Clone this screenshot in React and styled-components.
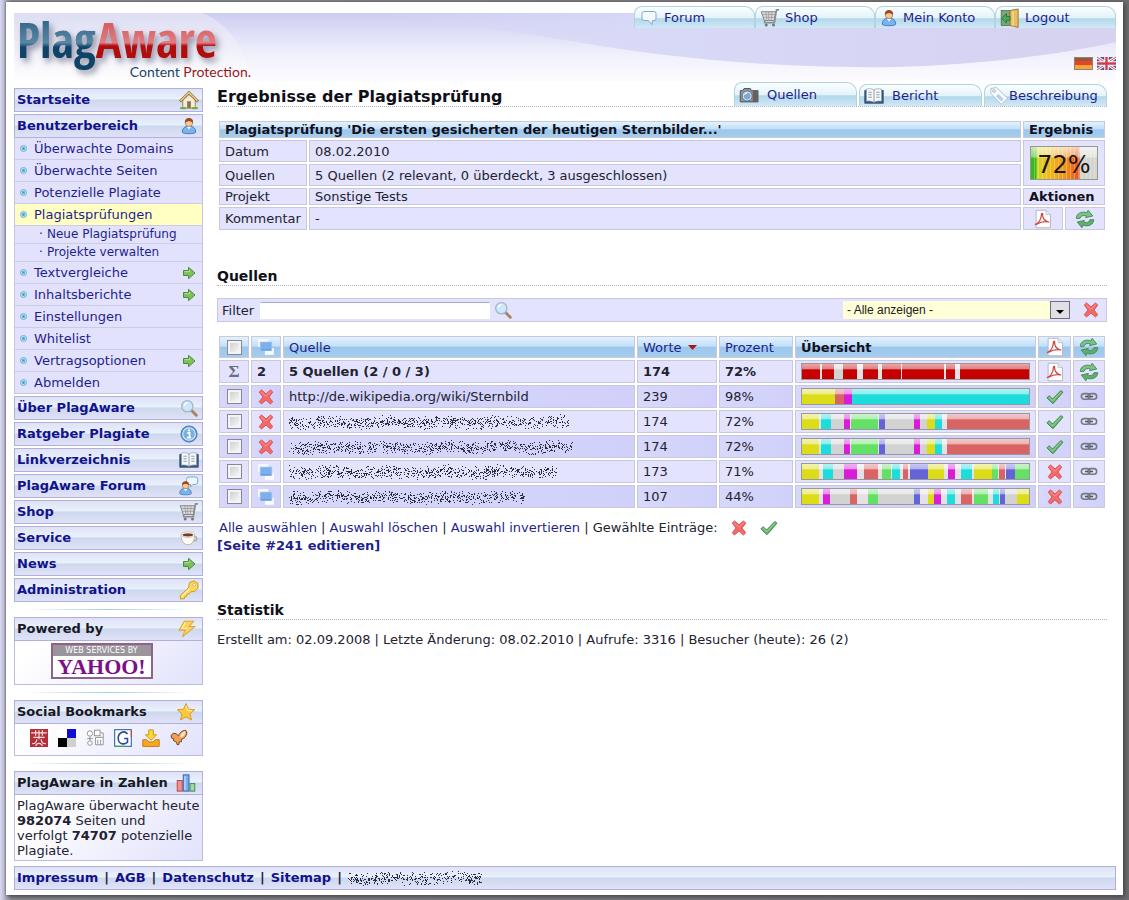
import styled, { createGlobalStyle, css } from "styled-components";

const GlobalStyle = createGlobalStyle`
  *, *::before, *::after {
    box-sizing: border-box;
  }

  body {
    margin: 0;
    background: linear-gradient(90deg, #d9d9f2 0, #c4c4dc 3px, #a8a8b8 6px, #8a8a92 12px, #6c6c70 100%);
    color: #222230;
    font-family: "DejaVu Sans", Verdana, sans-serif;
    font-size: 13px;
    line-height: 15px;
  }

  a {
    color: #1f1f8c;
    text-decoration: none;
  }
`;

/* ---------- icons ---------- */

const Svg = styled.svg`
  display: block;
  flex: none;
  width: ${(props) => props.$size || 18}px;
  height: ${(props) => props.$size || 18}px;
`;

function Icon({ size, children }) {
  return (
    <Svg $size={size} viewBox="0 0 16 16" aria-hidden="true">
      {children}
    </Svg>
  );
}

const HouseIcon = () => (
  <Icon size={20}>
    <path d="M3 8v6.500h10V8L8 3.500z" fill="#f6ecd6" stroke="#a08a5c" strokeWidth=".8" />
    <path d="M.8 9.200 8 2.200l7.200 7" fill="none" stroke="#8a6c3c" strokeWidth="2.400" />
    <path d="M1.200 8.700 8 2.100l6.800 6.600" fill="none" stroke="#e2c48c" strokeWidth="1.200" />
    <rect x="6.500" y="9" width="3" height="5.500" fill="#8b7350" />
    <path d="M1 14.500h4.500M10.500 14.500H15" stroke="#6fae4c" strokeWidth="1.800" />
  </Icon>
);

function Person() {
  return (
    <>
      <path d="M2 13.500c0-3 2-5 4-5.200h4c2 .2 4 2.200 4 5.200-1 1.800-11 1.800-12 0z" fill="#7ab4ee" stroke="#3c78b8" strokeWidth=".8" />
      <path d="M6 8.500h4L8 11z" fill="#fff" />
      <circle cx="8" cy="5.200" r="3.300" fill="#f6c898" stroke="#a8683c" strokeWidth=".6" />
      <path d="M4.400 5.400C4 2 6 .8 8 .8s4 1.200 3.600 4.600C10.800 4.200 9 3.800 8 3.800s-2.800.4-3.600 1.600z" fill="#9c4a1c" />
    </>
  );
}

const UserIcon = () => <Icon><Person /></Icon>;

const ForumUserIcon = () => (
  <Icon size={20}>
    <path d="M8 .8h5q2 0 2 2v2q0 2-2 2h-2L9 9l.3-2.200Q6 6.800 6 4.800v-2q0-2 2-2z" fill="#eef7ff" stroke="#78a8d4" strokeWidth=".8" />
    <g transform="translate(-1 3.500) scale(.78)"><Person /></g>
  </Icon>
);

const BubbleIcon = () => (
  <Icon size={16}>
    <path d="M3 1.500h10q2 0 2 2v5q0 2-2 2h-1.500L11 14.500 7.500 10.500H3q-2 0-2-2v-5q0-2 2-2z" fill="#f2faff" stroke="#88aac4" />
  </Icon>
);

const SearchIcon = () => (
  <Icon>
    <path d="m10 10 4.500 4.500" stroke="#a88460" strokeWidth="2.600" strokeLinecap="round" />
    <circle cx="6.500" cy="6.500" r="5" fill="#cfe6fa" stroke="#a4b8cc" strokeWidth="1.200" />
    <path d="M3.800 6a3 3 0 0 1 3-2.600" fill="none" stroke="#fff" strokeWidth="1.200" />
  </Icon>
);

const InfoIcon = () => (
  <Icon>
    <circle cx="8" cy="8" r="7.200" fill="#5c94cc" stroke="#4c7cb0" strokeWidth=".8" />
    <circle cx="8" cy="8" r="5.600" fill="#7cb0e0" stroke="#e4f0fc" strokeWidth=".9" />
    <path d="M6.500 7h2v4M6.300 11.300h3.600" stroke="#fff" strokeWidth="1.500" fill="none" />
    <circle cx="8" cy="4.800" r="1" fill="#fff" />
  </Icon>
);

const BookIcon = () => (
  <Icon size={20}>
    <path d="M.6 3.500h14.800v10.300H.6z" fill="#3c5c80" stroke="#2c4460" strokeWidth=".6" />
    <path d="M2 2.500c2-.6 4-.6 6 .7 2-1.300 4-1.300 6-.7v9.600c-2-.4-4-.2-6 .9-2-1.100-4-1.300-6-.9z" fill="#f6f8fa" stroke="#8898a8" strokeWidth=".5" />
    <path d="M8 3.200V13M3.500 5h2.700M3.500 7h2.700M3.500 9h2.700M9.800 5h2.700M9.800 7h2.700M9.800 9h2.700" stroke="#8090a4" strokeWidth=".7" />
  </Icon>
);

const CartIcon = () => (
  <Icon size={20}>
    <path d="M1 3h11.500l-1 7H3.500z" fill="#dcdcdc" stroke="#848484" strokeWidth=".8" />
    <path d="M2 5.200h10M2.500 7.500h9M4.700 3l.8 7M7 3v7M9.600 3 9 10" stroke="#969696" strokeWidth=".6" />
    <path d="M15.200 1.500h-2l-1.700 10.300H3.800L3.500 10" fill="none" stroke="#8c8c8c" strokeWidth="1.300" />
    <circle cx="5" cy="13.600" r="1.200" fill="#777" />
    <circle cx="10.800" cy="13.600" r="1.200" fill="#777" />
  </Icon>
);

const CupIcon = () => (
  <Icon>
    <path d="M11.500 6.500c4.500-1 4.500 4 .3 4.300" fill="none" stroke="#b4aca4" strokeWidth="1.300" />
    <path d="M1 5c0 5 2 9 6 9s6-4 6-9z" fill="#fcfaf6" stroke="#b8b0a4" strokeWidth=".8" />
    <ellipse cx="7" cy="5" rx="6" ry="2.500" fill="#fff" stroke="#c0b8ac" strokeWidth=".7" />
    <ellipse cx="7" cy="5.200" rx="4.700" ry="1.500" fill="#7c3c20" />
  </Icon>
);

const ArrowIcon = () => (
  <Icon size={16}>
    <path d="M2.500 5.500h5V2.300L14 8l-6.500 5.700v-3.200h-5z" fill="#7cc05c" stroke="#4a8c38" />
    <path d="M3.500 6.600h5V5" stroke="#b4e09c" fill="none" />
  </Icon>
);

const KeyIcon = () => (
  <Icon size={20}>
    <path d="M8.500 2 12 .7l3 1.800.2 4-2.700 2.700-3 .2-1.700 1.900-1.500.2-.2 1.700-1.600.3-.2 1.500-3.200.2L1 12.500l6.500-6.300z" fill="#fbd85c" stroke="#d09a2c" strokeWidth=".8" />
    <circle cx="12.200" cy="3.800" r="1.100" fill="#fff" stroke="#d09a2c" strokeWidth=".5" />
    <path d="m2.400 13 6-6" stroke="#fff2a8" />
  </Icon>
);

const BoltIcon = () => (
  <Icon>
    <path d="M5.500 1.200h8.300L10 5.800h5L3.800 15l2.600-6H1z" fill="#fcd45c" stroke="#e0a43c" strokeWidth=".9" />
    <path d="m6.500 2.400-3 5.200h4.800" fill="none" stroke="#fff0b0" />
  </Icon>
);

const StarIcon = () => (
  <Icon size={20}>
    <path d="m8 1.200 2 4.500 5 .5-3.800 3.300 1.200 4.900L8 11.800l-4.400 2.600 1.200-4.900L1 6.200l5-.5z" fill="#fcc83c" stroke="#dc9c30" strokeWidth=".8" strokeLinejoin="round" />
    <path d="m8 3 1.200 3.500 3.600.6" fill="none" stroke="#ffe894" />
  </Icon>
);

const ChartIcon = () => (
  <Icon size={20}>
    <rect x="1" y="6" width="4" height="8.500" fill="#f09090" stroke="#c04848" strokeWidth=".8" />
    <rect x="5.800" y="1.500" width="4.600" height="13" fill="#78acec" stroke="#3468b4" strokeWidth=".8" />
    <rect x="11.200" y="8.500" width="3.800" height="6" fill="#a8d8a0" stroke="#3c8c64" strokeWidth=".8" />
    <path d="M7.200 2.500v11" stroke="#c8e0fc" />
  </Icon>
);

const DoorIcon = () => (
  <Icon size={20}>
    <rect x="1" y="2" width="7" height="12" fill="#7ca878" stroke="#587858" strokeWidth=".7" />
    <path d="m8 2 6.500-1.200v14.700L8 14z" fill="#e8bc60" stroke="#a07830" strokeWidth=".8" />
    <path d="M10.500 2.500v12" stroke="#f8dc98" />
    <path d="M8 6.800H5.200V4.500L1.200 8.300l4 3.800V9.800H8z" fill="#4ca85c" stroke="#28743c" strokeWidth=".7" />
  </Icon>
);

const CameraIcon = () => (
  <Icon size={20}>
    <path d="M1 4.500h2l1-1.700h5l1 1.700h5.200v9H1z" fill="#8c94a0" stroke="#505860" strokeWidth=".8" />
    <path d="M11 4.500h4.200v9H11z" fill="#68605c" />
    <circle cx="6.500" cy="8.800" r="4" fill="#d8e4f0" stroke="#586878" strokeWidth=".7" />
    <circle cx="6.500" cy="8.800" r="2.700" fill="#7ca8d8" />
    <path d="M4.500 8a2 2 0 0 1 2-1.600" fill="none" stroke="#fff" strokeWidth=".8" />
  </Icon>
);

const TagIcon = () => (
  <Icon size={20}>
    <path d="M1.500 2 6 1.200l8.800 8.500-5 5L1.500 6z" fill="#fafcff" stroke="#b4c0cc" strokeWidth=".8" />
    <path d="m7.500 6.200 4.300 4.200-2 2-4.300-4.200z" fill="#b4d0f0" />
    <circle cx="4" cy="4" r="1.200" fill="#dce8f4" stroke="#98a8b8" strokeWidth=".5" />
  </Icon>
);

const PdfIcon = () => (
  <Icon size={20}>
    <path d="M2.500 1h8l3.500 3.500V15H2.500z" fill="#fff" stroke="#b8b8c0" strokeWidth=".8" />
    <path d="M10.500 1v3.500H14" fill="#eee" stroke="#b8b8c0" strokeWidth=".6" />
    <path d="M1.500 12.500c3-1 5-4.500 5.300-8.300.1-1.200 1-.8.900.2C7.500 7 9.500 9.500 13 10.600M3 12.200c3-2 6-2.500 10-1.800" fill="none" stroke="#cc4440" />
  </Icon>
);

const RefreshIcon = () => (
  <Icon size={20}>
    <path d="M1 7.500C1 3.500 5.500 1.500 9.500 3L10.500 1l3.700 4.600-5.700 1.300.6-1.400C6.800 4.600 4.500 5.500 4 7.500z" fill="#7cc084" stroke="#3c8854" strokeWidth=".7" />
    <path d="M15 8.500c0 4-4.500 6-8.500 4.500L5.500 15l-3.700-4.600 5.700-1.300-.6 1.400c2.300.9 4.600 0 5.100-2z" fill="#62ac6c" stroke="#3c8854" strokeWidth=".7" />
  </Icon>
);

const CrossIcon = () => (
  <Icon>
    <path d="M2 3.600 4 1.700l4 3.600 4-3.600 2 2L10.600 8l3.400 4.200-2.100 2L8 10.600l-4 3.600-2-2L5.400 8z" fill="#f46a6a" stroke="#d84848" strokeWidth=".8" strokeLinejoin="round" />
    <path d="m3.500 3.500 4.400 3.700 4.300-4" stroke="#f88c88" fill="none" />
  </Icon>
);

const CheckIcon = () => (
  <Icon>
    <path d="m.8 8.800 2-2 3 3 7.400-7.500 1.900 1.400L6.200 14z" fill="#66b46c" stroke="#388448" strokeWidth=".8" strokeLinejoin="round" />
    <path d="m2.600 8.200 3.200 3.300 7.600-8" stroke="#a4dca4" fill="none" strokeWidth=".8" />
  </Icon>
);

const LinkIcon = () => (
  <Icon>
    <rect x="1.200" y="5" width="7.600" height="5" rx="2.500" fill="none" stroke="#787880" strokeWidth="1.400" />
    <rect x="7.200" y="5" width="7.600" height="5" rx="2.500" fill="none" stroke="#787880" strokeWidth="1.400" />
    <path d="M4.500 7.500h2.500M9 7.500h2.500" stroke="#50505c" strokeWidth="1.300" />
  </Icon>
);

const PagesIcon = () => (
  <Icon>
    <rect x="1" y="1" width="9" height="7" fill="#f8fbff" />
    <rect x="7" y="9" width="8" height="6" fill="#f8fbff" />
    <rect x="2.800" y="3.600" width="10.400" height="7.600" fill="#7cb0ec" stroke="#a0c4f0" strokeWidth=".6" />
    <path d="M3.500 10.600h9" stroke="#6494d8" />
  </Icon>
);

const Flag = styled.svg`
  display: block;
  width: 19px;
  height: 13px;
`;

const GermanFlag = () => (
  <Flag viewBox="0 0 19 13" role="img" aria-label="Deutsch">
    <rect width="19" height="13" fill="#98806c" />
    <rect x="1" y="1" width="17" height="3" fill="#8c5c48" />
    <rect x="1" y="4" width="17" height="4" fill="#e84424" />
    <rect x="1" y="8" width="17" height="4" fill="#f8a43c" />
  </Flag>
);

const BritishFlag = () => (
  <Flag viewBox="0 0 19 13" role="img" aria-label="English">
    <rect width="19" height="13" fill="#4c5888" />
    <path d="m0 0 19 13M19 0 0 13" stroke="#fff" strokeWidth="3" />
    <path d="m0 0 19 13M19 0 0 13" stroke="#cc4458" />
    <path d="M9.500 0v13M0 6.500h19" stroke="#fff" strokeWidth="4.500" />
    <path d="M9.500 0v13M0 6.500h19" stroke="#d03c50" strokeWidth="2.400" />
  </Flag>
);

/* ---------- frame ---------- */

const Page = styled.div`
  margin: 2px 6px 5px;
  padding: 4px 7px 5px 8px;
  background: #fff;
  box-shadow: 0 0 2px #55555c, 2px 2px 4px #48484c;
`;

const Header = styled.header`
  display: grid;
  grid-template-columns: 1fr;
`;

const HeaderArt = styled.svg`
  grid-area: 1 / 1;
  width: 100%;
  height: 68px;
  margin-top: 7px;
`;

const HeaderContent = styled.div`
  grid-area: 1 / 1;
  display: flex;
  justify-content: space-between;
  height: 76px;
`;

const Logo = styled.a`
  display: flex;
  flex-direction: column;
  align-items: flex-end;
  width: 237px;
  padding-top: 6px;
`;

const LogoWord = styled.svg`
  display: block;
  width: 100%;
  height: 52px;
  overflow: visible;
  font-family: "Liberation Sans Narrow", "Open Sans Condensed", "DejaVu Sans Condensed", sans-serif;
  font-size: 48px;
  font-weight: 700;
`;

const LogoClaim = styled.span`
  color: #1c4468;
  font-family: Lato, sans-serif;
  font-size: 14px;
  line-height: 16px;

  em {
    color: #981820;
    font-style: normal;
  }
`;

const HeaderSide = styled.div`
  display: flex;
  flex-direction: column;
  align-items: flex-end;
  justify-content: space-between;
  padding-bottom: 12px;
`;

const Flags = styled.div`
  display: flex;
  gap: 4px;
`;

const Tabs = styled.nav`
  display: flex;
  align-items: flex-end;
  gap: ${(props) => props.$gap || 0}px;
`;

const Tab = styled.a`
  display: flex;
  align-items: center;
  gap: ${(props) => props.$gap ?? 8}px;
  width: ${(props) => props.$width}px;
  height: ${(props) => (props.$active ? 24 : 22)}px;
  padding: 0 4px;
  border: 1px solid #b4d4dc;
  border-bottom: 0;
  border-radius: 8px 10px 0 0;
  background: linear-gradient(#fafeff 0, #e4f4fa 50%, #b4d8ea 56%, #d0e8f8 100%);
  white-space: nowrap;
`;

const Columns = styled.div`
  display: grid;
  grid-template-columns: 189px minmax(0, 1fr);
  column-gap: 14px;
`;

/* ---------- sidebar ---------- */

const Sidebar = styled.aside`
  display: flex;
  flex-direction: column;
  padding-top: 6px;
`;

const SideMenu = styled.nav`
  display: flex;
  flex-direction: column;
  gap: 2px;
`;

const barStyle = css`
  border: 1px solid #b0b0d8;
  background: linear-gradient(#dfe2f6 0, #e9f1fc 45%, #cdd8ec 50%, #e0e2fa 100%);
  font-weight: 700;
`;

const NavBar = styled.a`
  ${barStyle}
  display: flex;
  align-items: center;
  justify-content: space-between;
  height: 24px;
  padding: 0 3px 1px 2px;
  color: #12128c;
`;

const IconSlot = styled.span`
  display: flex;
  justify-content: center;
  width: 20px;
`;

const SubMenu = styled.ul`
  margin: 0;
  padding: 0;
  border: 1px solid #c8c4e4;
  border-top: 0;
  background: #e2e2fd;
  list-style: none;
`;

const SubItem = styled.li`
  a {
    display: flex;
    align-items: center;
    height: ${(props) => (props.$nested ? 18 : 22)}px;
    padding: 0 5px 0 ${(props) => (props.$nested ? 24 : 5)}px;
    background: ${(props) => (props.$active ? "#ffffc4" : "transparent")};
    border-bottom: 1px solid #cccce6;
    font-size: ${(props) => (props.$nested ? 12 : 13)}px;
  }

  &:last-child a {
    height: 21px;
    border-bottom: 0;
  }

  svg:last-child {
    margin-left: auto;
  }
`;

const Bullet = styled.span`
  width: 7px;
  height: 7px;
  margin-right: 7px;
  border: 1px solid #68b0d0;
  border-radius: 50%;
  background: radial-gradient(#48a0cc 25%, #c0e8f8 60%);
`;

const Dot = styled.span`
  width: 8px;
`;

const Separator = styled.hr`
  width: 100%;
  height: 1px;
  margin: 7px 0;
  border: 0;
  background: linear-gradient(90deg, transparent 5%, #a8ccdc 50%, transparent 95%);
`;

const Box = styled.section`
  border: 1px solid #bcbce0;
  background: linear-gradient(135deg, #fff 20%, #e2e2fc);
`;

const BoxTitle = styled.h2`
  ${barStyle}
  display: flex;
  align-items: center;
  justify-content: space-between;
  height: 24px;
  margin: -1px -1px 0;
  padding: 0 6px 1px 2px;
  font-size: 13px;
  color: #181824;
`;

const BoxBody = styled.div`
  display: flex;
  justify-content: center;
  gap: 10px;
  padding: ${(props) => props.$pad};
`;

const BoxText = styled.p`
  margin: 0;
  padding: 3px 2px 2px;
`;

const Yahoo = styled.a`
  display: flex;
  flex-direction: column;
  width: 102px;
  height: 36px;
  border: 2px solid #8c6488;
  background: #fff;
  text-align: center;

  small {
    background: #9c949c;
    color: #fff;
    font-size: 8px;
    line-height: 11px;
    white-space: nowrap;
  }

  span {
    color: #7c1088;
    font: 700 22px/21px "Liberation Serif", serif;
  }
`;

/* ---------- main ---------- */

const Main = styled.main`
  padding-right: 9px;
`;

const TitleBar = styled.div`
  display: flex;
  align-items: flex-end;
  justify-content: space-between;
  border-bottom: 1px dotted #b4b4bc;
`;

const Title = styled.h1`
  margin: 0;
  color: #101018;
  font-size: 16px;
  line-height: 18px;
`;

const Heading = styled.h2`
  margin: ${(props) => props.$space}px 0 0;
  border-bottom: 1px dotted #b4b4bc;
  color: #101018;
  font-size: 14px;
  line-height: 17px;
`;

const Table = styled.table`
  width: 100%;
  margin-top: 12px;
  border-spacing: 2px;
  table-layout: fixed;
`;

const cellStyle = css`
  padding: 0 5px;
  border: 1px solid #c9c8de;
  text-align: left;
  white-space: nowrap;
`;

const headFill = "linear-gradient(#e2f2fe 0, #c4e0f8 45%, #9cc6ec 52%, #a4ceee 100%)";

const Th = styled.th`
  ${cellStyle}
  height: ${(props) => props.$height || 21}px;
  background: ${(props) => (props.$plain ? "#e3e3fd" : headFill)};
  color: #101020;
  font-weight: ${(props) => (props.$light ? 400 : 700)};
`;

const Td = styled.td`
  ${cellStyle}
  height: ${(props) => props.$height || 23}px;
  background: ${(props) => (props.$dark ? "linear-gradient(90deg, #d8d8fb, #d0d0fa)" : "#e3e3fd")};
  font-weight: ${(props) => (props.$strong ? 700 : 400)};
`;

const Center = styled.span`
  display: flex;
  align-items: center;
  justify-content: center;
`;

const Result = styled.div`
  width: 68px;
  height: 34px;
  margin: 0 auto;
  border: 1px solid #98988c;
  background:
    linear-gradient(rgba(255, 255, 255, 0.7), rgba(255, 255, 255, 0.4) 32%, transparent 34%),
    repeating-linear-gradient(90deg, transparent 0 3px, rgba(255, 255, 160, 0.3) 3px 4px),
    linear-gradient(90deg, #38b820 0 5px, #c8d830 6px, #f0c020 15px, #f09020 35px, #e85020 48px, #d4d4d4 49px);
  color: #181818;
  font-size: 24px;
  line-height: 37px;
  text-align: center;
`;

const FilterBar = styled.form`
  display: flex;
  align-items: center;
  margin-top: 12px;
  height: 24px;
  padding: 0 6px 0 4px;
  border: 1px solid #c9c8de;
  background: #e3e3fd;
`;

const FilterInput = styled.input`
  width: 230px;
  height: 17px;
  margin: 0 4px 0 6px;
  border: 1px solid #fff;
  border-top-color: #a8a8c4;
  background: #fff;
  font: inherit;
`;

const IconButton = styled.button`
  display: inline-flex;
  padding: 0;
  border: 0;
  background: none;
  cursor: pointer;
`;

const SelectBox = styled.span`
  display: grid;
  align-items: center;
  width: 227px;
  margin: 0 12px 0 auto;

  select {
    grid-area: 1 / 1;
    height: 18px;
    padding: 0 4px;
    border: 0;
    border-radius: 0;
    appearance: none;
    background: #ffffd8;
    color: #202020;
    font: 12px "Liberation Sans", Arial, sans-serif;
  }

  svg {
    grid-area: 1 / 1;
    justify-self: end;
    width: 20px;
    height: 18px;
    pointer-events: none;
  }
`;

const Checkbox = styled.input.attrs({ type: "checkbox" })`
  width: 15px;
  height: 15px;
  margin: 0;
  border: 1px solid #888890;
  outline: 2px solid #f4f4f8;
  outline-offset: -3px;
  appearance: none;
  background: linear-gradient(135deg, #c8c8c8, #fff);

  &:checked {
    background: #4c6ca8;
  }
`;

const SortMark = styled.svg`
  width: 9px;
  height: 5px;
  margin: 0 0 2px 6px;
`;

const Sigma = styled.b`
  color: #6c6c84;
  font: 700 17px/17px "Liberation Serif", serif;
`;

const Bar = styled.div`
  display: flex;
  height: 17px;
  border: 1px solid #9898a0;

  i {
    background-image: linear-gradient(
      rgba(255, 255, 255, 0.65) 0,
      rgba(255, 255, 255, 0.5) 34%,
      rgba(255, 255, 255, 0) 38%
    );
  }
`;

const Noise = styled.svg`
  display: block;
  height: 16px;
`;

const Line = styled.div`
  display: flex;
  align-items: center;
  margin-top: ${(props) => props.$space || 0}px;
  padding-left: ${(props) => props.$indent || 0}px;
  line-height: 18px;
  white-space: pre;
`;

const LineIcons = styled.span`
  display: flex;
  gap: 12px;
  margin-left: 12px;
`;

const Footer = styled.footer`
  ${barStyle}
  display: flex;
  align-items: center;
  gap: 6px;
  height: 24px;
  margin-top: 5px;
  padding: 0 2px 1px;

  a {
    color: #12128c;
  }
`;

/* ---------- data ---------- */

const barColors = {
  r: "#c40000",
  g: "#d2d2d2",
  w: "#e4e0e4",
  y: "#dcdc18",
  s: "#d86464",
  m: "#d81cd8",
  c: "#1cdcdc",
  G: "#64e064",
  b: "#6464d8",
};

const repeated = "y52 w5 c31 g39 m18 w2 G82 w3 b17 g89 m17 g21 y25 c21 w16 s246";

const sources = [
  { url: "http://de.wikipedia.org/wiki/Sternbild", words: 239, percent: "98%", out: true, ok: true, bar: "y98 s30 m22 c534" },
  { noise: 280, words: 174, percent: "72%", out: true, ok: true, bar: repeated },
  { noise: 284, words: 174, percent: "72%", out: true, ok: true, bar: repeated },
  {
    noise: 268,
    words: 173,
    percent: "71%",
    bar: "y52 w12 c30 g33 m39 w21 s42 w13 G26 w3 c24 w9 s16 w5 b54 y48 w12 m22 w17 c34 w5 y56 G19 w3 s18 w3 b26 G42",
  },
  {
    noise: 236,
    words: 107,
    percent: "44%",
    bar: "y50 w14 m21 g61 s20 w33 G30 g109 b17 w25 y19 m21 w18 c23 w17 s34 w5 G44 w13 c19 w3 b17 g34 y37",
  },
];

const totalBar = "r53 w7 r35 g28 r44 w16 r46 w11 r57 w3 r128 w5 r28 w14 r209";

const subMenu = [
  { label: "Überwachte Domains" },
  { label: "Überwachte Seiten" },
  { label: "Potenzielle Plagiate" },
  { label: "Plagiatsprüfungen", active: true },
  { label: "Neue Plagiatsprüfung", nested: true },
  { label: "Projekte verwalten", nested: true },
  { label: "Textvergleiche", more: true },
  { label: "Inhaltsberichte", more: true },
  { label: "Einstellungen" },
  { label: "Whitelist" },
  { label: "Vertragsoptionen", more: true },
  { label: "Abmelden" },
];

const navItems = [
  ["Über PlagAware", SearchIcon],
  ["Ratgeber Plagiate", InfoIcon],
  ["Linkverzeichnis", BookIcon],
  ["PlagAware Forum", ForumUserIcon],
  ["Shop", CartIcon],
  ["Service", CupIcon],
  ["News", ArrowIcon],
  ["Administration", KeyIcon],
];

/* ---------- parts ---------- */

function MatchBar({ segments }) {
  return (
    <Bar>
      {segments.split(" ").map((part, i) => (
        <i key={i} style={{ flex: `${part.slice(1)} 0 0`, backgroundColor: barColors[part[0]] }} />
      ))}
    </Bar>
  );
}

// speckles that make an address unreadable
function Scribble({ width, seed = 1 }) {
  let state = seed * 7919 + width;
  const random = () => {
    state = (state * 1103515245 + 12345) % 2147483648;
    return state / 2147483648;
  };
  let d = "";
  for (let i = 0; i < width * 3; i++) {
    const x = Math.floor(random() * width);
    const spread = random() + random() - 1;
    const y = Math.round(8 + Math.sin(x / 9) + spread * 7);
    d += `M${x} ${y}h1v1h-1z`;
  }
  return (
    <Noise width={width} viewBox={`0 0 ${width} 16`} aria-hidden="true">
      <path d={d} fill="#2c2c3c" />
    </Noise>
  );
}

function PlagLogo() {
  return (
    <Logo href="#">
      <LogoWord viewBox="0 0 237 52">
        <defs>
          <linearGradient id="word-blue" x1="0" y1="0" x2="0" y2="1">
            <stop offset="0" stopColor="#1c5478" />
            <stop offset=".55" stopColor="#5a86a4" />
            <stop offset=".62" stopColor="#0c4468" />
            <stop offset="1" stopColor="#0c4468" />
          </linearGradient>
          <linearGradient id="word-red" x1="0" y1="0" x2="0" y2="1">
            <stop offset="0" stopColor="#cc4448" />
            <stop offset=".55" stopColor="#e07c80" />
            <stop offset=".6" stopColor="#b00810" />
            <stop offset="1" stopColor="#b00810" />
          </linearGradient>
          <filter id="word-shadow" x="-10%" y="-10%" width="120%" height="140%">
            <feDropShadow dx="3" dy="4" stdDeviation="3" floodColor="#50506c" floodOpacity=".6" />
          </filter>
        </defs>
        <text x="3" y="46" filter="url(#word-shadow)">
          <tspan fill="url(#word-blue)">Plag</tspan>
          <tspan fill="url(#word-red)">Aware</tspan>
        </text>
      </LogoWord>
      <LogoClaim>
        Content <em>Protection.</em>
      </LogoClaim>
    </Logo>
  );
}

function PageHeader() {
  return (
    <Header>
      <HeaderArt viewBox="0 0 1103 68" preserveAspectRatio="none" aria-hidden="true">
        <defs>
          <linearGradient id="sky" x1="0" y1="0" x2="0" y2="1">
            <stop offset="0" stopColor="#cdcdf2" />
            <stop offset=".6" stopColor="#f0f0fc" />
            <stop offset="1" stopColor="#fcfcff" />
          </linearGradient>
          <linearGradient id="wave">
            <stop offset="0" stopColor="#d4d4f6" stopOpacity=".2" />
            <stop offset=".4" stopColor="#d8d8f7" />
            <stop offset="1" stopColor="#d6d2f0" />
          </linearGradient>
          <linearGradient id="glow" x1="0" y1="0" x2="0" y2="1">
            <stop offset="0" stopColor="#dedef4" />
            <stop offset="1" stopColor="#fff" />
          </linearGradient>
        </defs>
        <rect width="1103" height="68" fill="url(#sky)" />
        <path d="M366 0C450 10 520 22 607 36c110 16 200 19 273 18 80-2 160-11 223-25V0z" fill="url(#wave)" />
        <path d="M0 0h188c26 10 44 34 50 68H0z" fill="url(#glow)" />
      </HeaderArt>
      <HeaderContent>
        <PlagLogo />
        <HeaderSide>
          <Tabs>
            <Tab href="#" $width={121} $gap={5}><IconSlot><BubbleIcon /></IconSlot>Forum</Tab>
            <Tab href="#" $width={120} $gap={5}><CartIcon />Shop</Tab>
            <Tab href="#" $width={120} $gap={5}><UserIcon />Mein Konto</Tab>
            <Tab href="#" $width={121} $gap={5}><DoorIcon />Logout</Tab>
          </Tabs>
          <Flags>
            <a href="#"><GermanFlag /></a>
            <a href="#"><BritishFlag /></a>
          </Flags>
        </HeaderSide>
      </HeaderContent>
    </Header>
  );
}

function SideNav() {
  return (
    <SideMenu>
      <NavBar href="#">Startseite<IconSlot><HouseIcon /></IconSlot></NavBar>
      <div>
        <NavBar href="#">Benutzerbereich<IconSlot><UserIcon /></IconSlot></NavBar>
        <SubMenu>
          {subMenu.map(({ label, active, nested, more }) => (
            <SubItem key={label} $active={active} $nested={nested}>
              <a href="#">
                {nested ? <Dot>·</Dot> : <Bullet />}
                {label}
                {more && <ArrowIcon />}
              </a>
            </SubItem>
          ))}
        </SubMenu>
      </div>
      {navItems.map(([label, NavIcon]) => (
        <NavBar href="#" key={label}>
          {label}
          <IconSlot><NavIcon /></IconSlot>
        </NavBar>
      ))}
    </SideMenu>
  );
}

function SocialLinks() {
  return (
    <BoxBody $pad="5px 0 8px">
      <a href="#" aria-label="Mister Wong">
        <Icon>
          <rect width="16" height="16" fill="#b43038" />
          <path d="M1 3.500h14M3 7.500h10M8 1v8M5 1v5M11 1v5M2 13c3 0 4-2 4-4M14 13c-3 0-4-2-4-4M5 15c1-3 5-3 6 0" fill="none" stroke="#f4dcdc" strokeWidth="1.100" />
        </Icon>
      </a>
      <a href="#" aria-label="Delicious">
        <Icon>
          <rect width="16" height="16" fill="#fff" />
          <rect x="8" width="8" height="8" fill="#1010cc" />
          <rect y="8" width="8" height="8" fill="#000" />
          <rect x="8" y="8" width="8" height="8" fill="#d0d0d0" />
        </Icon>
      </a>
      <a href="#" aria-label="Digg">
        <Icon>
          <g fill="#fff" stroke="#8c8c8c" strokeWidth=".8">
            <circle cx="3.500" cy="4" r="2.400" />
            <path d="M3.500 6.500v4M1 8.500h5" />
            <circle cx="3.500" cy="12.500" r="2" />
            <rect x="7.500" y="1" width="5" height="5" />
            <path d="M12.500 3.500h2.800V14H8.500V7.500H15M10.500 9.500v4M13 9.500v4" />
          </g>
        </Icon>
      </a>
      <a href="#" aria-label="Google">
        <Icon>
          <rect x=".6" y=".6" width="14.800" height="14.800" fill="#fff" stroke="#3468b0" />
          <path d="M15.400 1v6" stroke="#d83c3c" />
          <path d="M1 15.400h9" stroke="#48a04c" />
          <path d="M12 4.500C10.500 2.600 8 2.300 6.300 3.300 2.500 5.600 3 12.500 7.500 13.200c1.700.2 3.300-.3 4.500-1.400V8.500H9" fill="none" stroke="#284c94" strokeWidth="1.400" />
        </Icon>
      </a>
      <a href="#" aria-label="Speichern">
        <Icon>
          <path d="M.7 9.500h3.500l2 2h3.600l2-2h3.500v6H.7z" fill="#f8a820" stroke="#c87410" strokeWidth=".8" />
          <path d="M6 .8h4v4.400h3L8 10 3 5.200h3z" fill="#fcdc30" stroke="#d08810" strokeWidth=".8" />
        </Icon>
      </a>
      <a href="#" aria-label="Empfehlen">
        <Icon>
          <path d="M1 5.500 3 3.800l2.500.4L7.500 6C8.500 3.500 11 1 14 1.200c1.500 1.300 1 4-.5 5.800-1.200 1.400-2.500 2-3.500 2.200l.3 2-2 .3-.5 2.500-1.600-.2-.3-2L3 10.300l.3-1.600L1.300 8z" fill="#f0a050" stroke="#643c20" strokeWidth=".8" />
          <path d="M9 7c0-2.500 2-4.500 4.500-4.700C13.900 5 12 7 10 7.800z" fill="#f8e4c4" />
        </Icon>
      </a>
    </BoxBody>
  );
}

function InfoTable() {
  return (
    <Table>
      <colgroup>
        <col style={{ width: 88 }} />
        <col />
        <col style={{ width: 40 }} />
        <col style={{ width: 40 }} />
      </colgroup>
      <tbody>
        <tr>
          <Th colSpan={2} $height={17}>Plagiatsprüfung 'Die ersten gesicherten der heutigen Sternbilder...'</Th>
          <Th colSpan={2} $height={17}>Ergebnis</Th>
        </tr>
        <tr>
          <Td $height={22}>Datum</Td>
          <Td $height={22}>08.02.2010</Td>
          <Td colSpan={2} rowSpan={2}><Result>72%</Result></Td>
        </tr>
        <tr>
          <Td $height={22}>Quellen</Td>
          <Td $height={22}>5 Quellen (2 relevant, 0 überdeckt, 3 ausgeschlossen)</Td>
        </tr>
        <tr>
          <Td $height={17}>Projekt</Td>
          <Td $height={17}>Sonstige Tests</Td>
          <Th colSpan={2} $plain $height={17}>Aktionen</Th>
        </tr>
        <tr>
          <Td>Kommentar</Td>
          <Td>-</Td>
          <Td><Center><IconButton aria-label="PDF"><PdfIcon /></IconButton></Center></Td>
          <Td><Center><IconButton aria-label="Aktualisieren"><RefreshIcon /></IconButton></Center></Td>
        </tr>
      </tbody>
    </Table>
  );
}

function SourceFilter() {
  return (
    <FilterBar onSubmit={(e) => e.preventDefault()}>
      <label htmlFor="filter">Filter</label>
      <FilterInput id="filter" type="text" />
      <IconButton aria-label="Suchen"><SearchIcon /></IconButton>
      <SelectBox>
        <select aria-label="Anzeige">
          <option>- Alle anzeigen -</option>
        </select>
        <svg viewBox="0 0 20 18" aria-hidden="true">
          <rect x=".5" y=".5" width="19" height="17" fill="#e0e0e6" stroke="#70707c" />
          <path d="M6 9h8l-4 4z" fill="#000" />
        </svg>
      </SelectBox>
      <IconButton type="reset" aria-label="Zurücksetzen"><CrossIcon /></IconButton>
    </FilterBar>
  );
}

function SourceRow({ source, index }) {
  const dark = index % 2 === 0;

  return (
    <tr>
      <Td $dark={dark}><Center><Checkbox aria-label={`Eintrag ${index + 1}`} /></Center></Td>
      <Td $dark={dark}><Center>{source.out ? <CrossIcon /> : <PagesIcon />}</Center></Td>
      <Td $dark={dark}>{source.url || <Scribble width={source.noise} seed={index} />}</Td>
      <Td $dark={dark}>{source.words}</Td>
      <Td $dark={dark}>{source.percent}</Td>
      <Td $dark={dark}><MatchBar segments={source.bar} /></Td>
      <Td $dark={dark}><Center>{source.ok ? <CheckIcon /> : <CrossIcon />}</Center></Td>
      <Td $dark={dark}><Center><LinkIcon /></Center></Td>
    </tr>
  );
}

function SourceTable() {
  return (
    <Table>
      <colgroup>
        {[30, 30, undefined, 80, 74, 241, 33, 32].map((width, i) => (
          <col key={i} style={{ width }} />
        ))}
      </colgroup>
      <thead>
        <tr>
          <Th><Center><Checkbox aria-label="Alle" /></Center></Th>
          <Th><Center><PagesIcon /></Center></Th>
          <Th $light><a href="#">Quelle</a></Th>
          <Th $light>
            <a href="#">
              Worte
              <SortMark viewBox="0 0 9 5"><path d="M0 0h9L4.500 5z" fill="#a81820" /></SortMark>
            </a>
          </Th>
          <Th $light><a href="#">Prozent</a></Th>
          <Th>Übersicht</Th>
          <Th><Center><PdfIcon /></Center></Th>
          <Th><Center><RefreshIcon /></Center></Th>
        </tr>
      </thead>
      <tbody>
        <tr>
          <Td><Center><Sigma>Σ</Sigma></Center></Td>
          <Td $strong>2</Td>
          <Td $strong>5 Quellen (2 / 0 / 3)</Td>
          <Td $strong>174</Td>
          <Td $strong>72%</Td>
          <Td><MatchBar segments={totalBar} /></Td>
          <Td><Center><PdfIcon /></Center></Td>
          <Td><Center><RefreshIcon /></Center></Td>
        </tr>
        {sources.map((source, i) => (
          <SourceRow key={i} source={source} index={i} />
        ))}
      </tbody>
    </Table>
  );
}

function App() {
  return (
    <>
      <GlobalStyle />
      <Page>
        <PageHeader />
        <Columns>
          <Sidebar>
            <SideNav />
            <Separator />
            <Box>
              <BoxTitle>Powered by<BoltIcon /></BoxTitle>
              <BoxBody $pad="2px 14px 5px 0">
                <Yahoo href="#">
                  <small>WEB SERVICES BY</small>
                  <span>YAHOO!</span>
                </Yahoo>
              </BoxBody>
            </Box>
            <Separator />
            <Box>
              <BoxTitle>Social Bookmarks<StarIcon /></BoxTitle>
              <SocialLinks />
            </Box>
            <Separator />
            <Box>
              <BoxTitle>PlagAware in Zahlen<ChartIcon /></BoxTitle>
              <BoxText>
                PlagAware überwacht heute <b>982074</b> Seiten und
                <br />
                verfolgt <b>74707</b> potenzielle Plagiate.
              </BoxText>
            </Box>
          </Sidebar>
          <Main>
            <TitleBar>
              <Title>Ergebnisse der Plagiatsprüfung</Title>
              <Tabs $gap={2}>
                <Tab href="#" $width={123} $active><CameraIcon />Quellen</Tab>
                <Tab href="#" $width={123}><BookIcon />Bericht</Tab>
                <Tab href="#" $width={123} $gap={0}><TagIcon />Beschreibung</Tab>
              </Tabs>
            </TitleBar>
            <InfoTable />
            <Heading $space={36}>Quellen</Heading>
            <SourceFilter />
            <SourceTable />
            <Line $space={9} $indent={2}>
              <a href="#">Alle auswählen</a> | <a href="#">Auswahl löschen</a> | <a href="#">Auswahl invertieren</a>
              {" | Gewählte Einträge:"}
              <LineIcons>
                <IconButton aria-label="Ausschließen"><CrossIcon /></IconButton>
                <IconButton aria-label="Einschließen"><CheckIcon /></IconButton>
              </LineIcons>
            </Line>
            <Line><a href="#"><b>[Seite #241 editieren]</b></a></Line>
            <Heading $space={47}>Statistik</Heading>
            <Line $space={11}>
              Erstellt am: 02.09.2008 | Letzte Änderung: 08.02.2010 | Aufrufe: 3316 | Besucher (heute): 26 (2)
            </Line>
          </Main>
        </Columns>
        <Footer>
          <a href="#">Impressum</a>|<a href="#">AGB</a>|<a href="#">Datenschutz</a>|<a href="#">Sitemap</a>|
          <Scribble width={134} seed={9} />
        </Footer>
      </Page>
    </>
  );
}

export default App;
